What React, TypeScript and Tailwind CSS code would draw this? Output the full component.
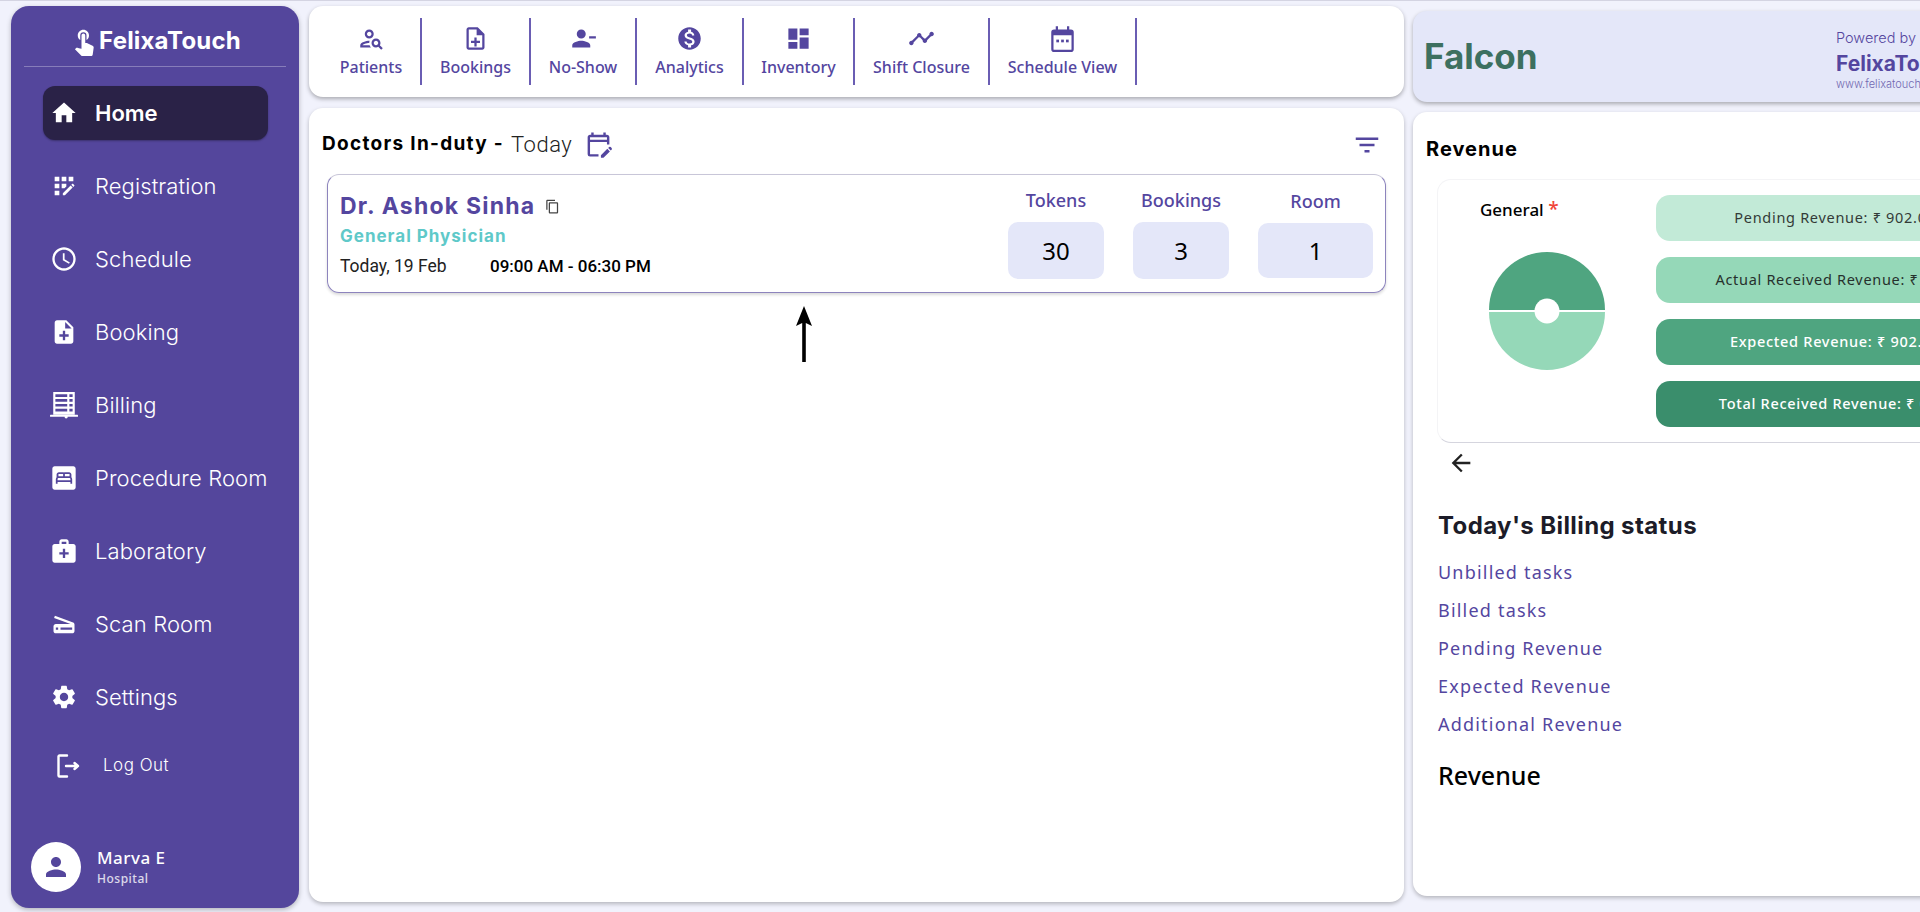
import {
  MdHome, MdAppRegistration, MdAccessTime, MdNoteAdd, MdBedroomParent, MdMedicalServices, MdScanner,
  MdSettings, MdPerson, MdTouchApp, MdOutlinePersonSearch, MdOutlineNoteAdd, MdPersonRemoveAlt1,
  MdMonetizationOn, MdDashboard, MdTimeline, MdOutlineEditCalendar, MdFilterList,
  MdOutlineContentCopy, MdArrowBack,
} from "react-icons/md";

const purple = "text-[#54469f]";

function BillingIcon({ className }: { className?: string }) {
  return (
    <svg viewBox="0 0 26 26" className={className} fill="currentColor">
      <path
        fillRule="evenodd"
        d="M3 1h20v21H3zM5 3v2.500h11V3zM18 3v2.500h3V3zM5 7.500V10h11V7.500zM18 7.500V10h3V7.500zM5 12v2.500h11V12zM18 12v2.500h3V12zM5 16.500V19h11v-2.500zM18 16.500V19h3v-2.500z"
      />
      <rect x="0" y="22" width="26" height="2" rx="0.500" />
      <circle cx="15" cy="24" r="1.500" />
    </svg>
  );
}

function LogoutIcon({ className }: { className?: string }) {
  return (
    <svg viewBox="0 0 24 24" className={className} fill="none" stroke="currentColor" strokeWidth="2.400" strokeLinecap="round" strokeLinejoin="round">
      <path d="M11 1.500H3.500a1 1 0 0 0-1 1v19a1 1 0 0 0 1 1H11" />
      <path d="M10 12h12M18.500 9l3.500 3-3.500 3" />
    </svg>
  );
}

function ScheduleIcon({ className }: { className?: string }) {
  return (
    <svg viewBox="0 0 24 24" className={className} fill="currentColor">
      <path
        fillRule="evenodd"
        d="M6 1h2v3h8V1h2v3h1.500A2.500 2.500 0 0 1 22 6.500v15a2.500 2.500 0 0 1-2.500 2.500h-15A2.500 2.500 0 0 1 2 21.500v-15A2.500 2.500 0 0 1 4.500 4H6zM4 9v12.500a.5.5 0 0 0 .5.5h15a.5.5 0 0 0 .5-.5V9z"
      />
      <rect x="6.500" y="13" width="2.400" height="2.400" />
      <rect x="10.800" y="13" width="2.400" height="2.400" />
      <rect x="15.100" y="13" width="2.400" height="2.400" />
    </svg>
  );
}

const navItems = [
  { label: "Registration", icon: MdAppRegistration },
  { label: "Schedule", icon: MdAccessTime },
  { label: "Booking", icon: MdNoteAdd },
  { label: "Billing", icon: BillingIcon },
  { label: "Procedure Room", icon: MdBedroomParent },
  { label: "Laboratory", icon: MdMedicalServices },
  { label: "Scan Room", icon: MdScanner },
  { label: "Settings", icon: MdSettings },
];

const toolItems = [
  { label: "Patients", icon: MdOutlinePersonSearch, w: "w-[100px]" },
  { label: "Bookings", icon: MdOutlineNoteAdd, w: "w-[109px]" },
  { label: "No-Show", icon: MdPersonRemoveAlt1, w: "w-[106px]" },
  { label: "Analytics", icon: MdMonetizationOn, w: "w-[107px]" },
  { label: "Inventory", icon: MdDashboard, w: "w-[111px]" },
  { label: "Shift Closure", icon: MdTimeline, w: "w-[135px]" },
  { label: "Schedule View", icon: ScheduleIcon, w: "w-[147px]" },
];

const stats = [
  { label: "Tokens", value: "30", w: "w-[96px]", h: "h-[57px]", pad: "" },
  { label: "Bookings", value: "3", w: "w-[96px]", h: "h-[57px]", pad: "" },
  { label: "Room", value: "1", w: "w-[115px]", h: "h-[55px]", pad: "pt-[1px]" },
];

const revenueRows = [
  { text: "Pending Revenue: ₹ 902.00", cls: "bg-[#c2ead7] text-[#333b38]" },
  { text: "Actual Received Revenue: ₹ 0.00", cls: "bg-[#95d8b8] text-[#26302c]" },
  { text: "Expected Revenue: ₹ 902.00", cls: "bg-[#4fa580] text-white font-medium" },
  { text: "Total Received Revenue: ₹ 0.00", cls: "bg-[#3a8e6c] text-white font-medium" },
];

const billingLinks = ["Unbilled tasks", "Billed tasks", "Pending Revenue", "Expected Revenue", "Additional Revenue"];

function Sidebar() {
  return (
    <aside className="w-[288px] h-[902px] mt-[5px] ml-[11px] shrink-0 flex flex-col bg-[#54469c] rounded-[18px] shadow-[0_2px_5px_rgba(0,0,0,0.25)] text-white font-['Inter',sans-serif]">
      <div className="mx-[13px] h-[61px] border-b border-white/30 flex items-center justify-center pt-[9px]">
        <MdTouchApp className="w-[30px] h-[30px]" />
        <span className="text-[24px] font-bold tracking-[0.2px]">FelixaTouch</span>
      </div>
      <div className="ml-[32px] w-[225px] mt-[19px] h-[54px] rounded-[12px] bg-[#2a2247] flex items-center pl-[7px] gap-[17px] shadow-[0_1px_2px_rgba(0,0,0,0.3)]">
        <MdHome className="w-[28px] h-[28px]" />
        <span className="text-[22px] font-semibold">Home</span>
      </div>
      <nav className="ml-[32px] flex flex-col gap-[19px] mt-[19px]">
        {navItems.map((n) => (
          <div key={n.label} className="h-[54px] flex items-center pl-[7px] gap-[17px]">
            <n.icon className="w-[28px] h-[28px] shrink-0" />
            <span className="text-[22px] font-light tracking-[0.1px] whitespace-nowrap">{n.label}</span>
          </div>
        ))}
      </nav>
      <div className="ml-[45px] mt-[15px] h-[54px] flex items-center gap-[23px]">
        <LogoutIcon className="w-[24px] h-[24px]" />
        <span className="text-[17px] font-light tracking-[0.5px]">Log Out</span>
      </div>
      <div className="mt-auto mb-[16px] ml-[20px] flex items-center gap-[16px] font-['Noto_Sans',sans-serif]">
        <div className="w-[50px] h-[50px] rounded-full bg-white flex items-center justify-center">
          <MdPerson className="w-[30px] h-[30px] text-[#54469c]" />
        </div>
        <div className="pt-[2px]">
          <p className="text-[17px] font-medium leading-[22px] tracking-[0.5px]">Marva E</p>
          <p className="text-[12px] font-medium leading-[20px] tracking-[0.5px] text-white/80">Hospital</p>
        </div>
      </div>
    </aside>
  );
}

function Toolbar() {
  return (
    <div className="h-[91px] bg-white rounded-[14px] shadow-[0_2px_4px_rgba(0,0,0,0.3)] flex items-center pl-[13px] font-['Noto_Sans',sans-serif]">
      {toolItems.map((t) => (
        <div key={t.label} className={`${t.w} h-[67px] border-r-2 border-[#6a5db3] flex flex-col items-center ${purple}`}>
          <t.icon className="w-[27px] h-[27px] mt-[7px]" />
          <span className="text-[16px] font-medium leading-[20px] mt-[5px] whitespace-nowrap">{t.label}</span>
        </div>
      ))}
    </div>
  );
}

function DoctorCard() {
  return (
    <div className="mx-[18px] mt-[15px] h-[119px] rounded-[12px] border border-[#8d84bd] border-t-[#c8c6d8] shadow-[0_2px_3px_rgba(0,0,0,0.15)] flex items-center justify-between pl-[12px] pr-[12px]">
      <div className="pt-[2px]">
        <div className="flex items-center gap-[10px]">
          <span className={`text-[23px] font-bold leading-[30px] tracking-[1.2px] ${purple} font-['Inter',sans-serif]`}>Dr. Ashok Sinha</span>
          <MdOutlineContentCopy className="w-[15px] h-[15px] text-[#444]" />
        </div>
        <p className="text-[17px] font-bold leading-[24px] tracking-[1px] mt-[3px] text-[#5fc9c9] font-['Inter',sans-serif]">General Physician</p>
        <div className="flex mt-[6px] font-['Roboto',sans-serif] text-[17px] leading-[24px]">
          <span className="w-[150px] text-[#222] text-[17.500px]">Today, 19 Feb</span>
          <span className="font-medium text-black">09:00 AM - 06:30 PM</span>
        </div>
      </div>
      <div className="flex items-start gap-[29px] font-['Noto_Sans',sans-serif]">
        {stats.map((s) => (
          <div key={s.label} className={`flex flex-col items-center ${s.pad}`}>
            <span className={`text-[18px] font-medium leading-[24px] ${purple}`}>{s.label}</span>
            <div className={`${s.w} ${s.h} mt-[10px] rounded-[10px] bg-[#e4e7f9] flex items-center justify-center text-[24px] text-black`}>{s.value}</div>
          </div>
        ))}
      </div>
    </div>
  );
}

function MainPanel() {
  return (
    <main className="relative flex-1 mt-[11px] bg-white rounded-[14px] shadow-[0_2px_4px_rgba(0,0,0,0.25)]">
      <div className="flex items-center pl-[13px] pr-[22px] pt-[22px] h-[51px]">
        <span className="text-[19px] font-bold tracking-[1.3px] text-black font-['Inter',sans-serif]">Doctors In-duty -</span>
        <span className="ml-[7px] text-[22px] font-light text-[#222] tracking-[0.5px] font-['Roboto',sans-serif]">Today</span>
        <MdOutlineEditCalendar className={`ml-[12px] w-[29px] h-[29px] ${purple}`} />
        <MdFilterList className={`ml-auto w-[30px] h-[30px] ${purple}`} />
      </div>
      <DoctorCard />
      <svg viewBox="0 0 20 56" className="absolute left-[485px] top-[198px] w-[20px] h-[56px]">
        <path d="M10 0 L18 20 L11.800 17 V56 H8.200 V17 L2 20 Z" fill="#000" />
      </svg>
    </main>
  );
}

function RevenuePie() {
  return (
    <svg viewBox="0 0 120 120" className="w-[120px] h-[120px] ml-[49px] mt-[29px]">
      <path d="M2 59 A58 58 0 0 1 118 59 Z" fill="#4fa580" />
      <path d="M2 61 A58 58 0 0 0 118 61 Z" fill="#95d8b8" />
      <circle cx="60" cy="60" r="12.500" fill="#fff" />
    </svg>
  );
}

function RightPanel() {
  return (
    <div className="w-[600px] shrink-0 ml-[9px] mt-[10px] flex flex-col">
      <div className="h-[91px] rounded-[14px] bg-[#e4e7f9] shadow-[0_2px_4px_rgba(0,0,0,0.3)] flex pl-[11px]">
        <span className="w-[412px] self-center text-[35px] font-bold text-[#3d7060] font-['Inter',sans-serif]">Falcon</span>
        <div className={`pt-[17px] ${purple} font-['Inter',sans-serif]`}>
          <p className="text-[14.500px] font-light leading-[20px]">Powered by</p>
          <p className="text-[21px] font-bold leading-[32px]">FelixaTouch</p>
          <p className="text-[11px] font-light leading-[9px] opacity-80">www.felixatouch.com</p>
        </div>
      </div>
      <section className="h-[784px] mt-[10px] rounded-[14px] bg-white shadow-[0_2px_4px_rgba(0,0,0,0.25)] font-['Noto_Sans',sans-serif]">
        <h2 className="pl-[13px] pt-[24px] text-[20px] font-bold leading-[26px] tracking-[1px] text-black font-['Inter',sans-serif]">Revenue</h2>
        <div className="ml-[24px] mt-[17px] h-[264px] rounded-[14px] border border-[#f4f4f6] border-b-[#d5d5de] flex">
          <div className="w-[218px] shrink-0">
            <p className="ml-[42px] mt-[17px] text-[17px] font-medium leading-[24px] text-black">
              General <span className="text-[#f04438] text-[19px]">*</span>
            </p>
            <RevenuePie />
          </div>
          <div className="w-[358px] shrink-0 flex flex-col gap-[16px] pt-[15px]">
            {revenueRows.map((r) => (
              <div key={r.text} className={`h-[46px] rounded-[14px] flex items-center justify-center text-[14.500px] tracking-[0.7px] whitespace-nowrap ${r.cls}`}>
                {r.text}
              </div>
            ))}
          </div>
        </div>
        <MdArrowBack className="ml-[34px] mt-[6px] w-[28px] h-[28px] text-[#222]" />
        <h3 className="pl-[25px] mt-[34px] text-[24px] font-bold leading-[30px] tracking-[0.4px] text-[#1c1c28] font-['Inter',sans-serif]">Today's Billing status</h3>
        <ul className="pl-[25px] mt-[19px] flex flex-col gap-[13px]">
          {billingLinks.map((l) => (
            <li key={l} className={`text-[18px] leading-[25px] tracking-[1.2px] ${purple}`}>{l}</li>
          ))}
        </ul>
        <p className="pl-[25px] mt-[22px] text-[25px] font-medium leading-[32px] text-black">Revenue</p>
      </section>
    </div>
  );
}

export default function App() {
  return (
    <div className="w-[1920px] h-[912px] overflow-hidden flex items-start bg-[#f1f2fc] border-t border-[#d4d4e2]">
      <Sidebar />
      <div className="w-[1095px] h-[896px] ml-[10px] mt-[5px] shrink-0 flex flex-col">
        <Toolbar />
        <MainPanel />
      </div>
      <RightPanel />
    </div>
  );
}
